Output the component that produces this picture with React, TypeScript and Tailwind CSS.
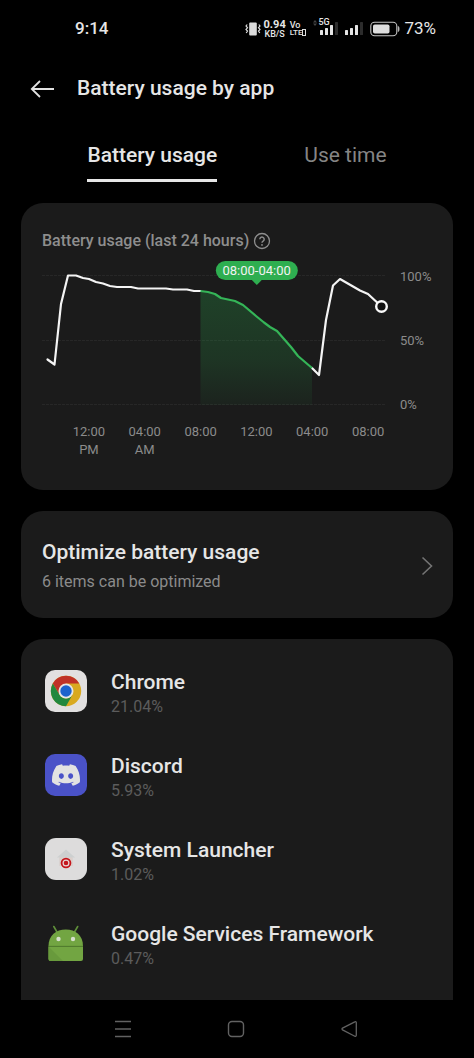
import type { ReactNode } from "react";
import { SiDiscord } from "react-icons/si";

const AXIS_TIMES = [
  ["12:00", "PM"],
  ["04:00", "AM"],
  ["08:00"],
  ["12:00"],
  ["04:00"],
  ["08:00"],
];

function VibrateIcon() {
  return (
    <svg width="16" height="16" viewBox="0 0 16 16" fill="none" stroke="#dcdcdc" strokeWidth="1.2">
      <rect x="4.2" y="1.5" width="7.6" height="13" rx="1" fill="#dcdcdc" stroke="none" />
      <path d="M2.2 3.5 1 5l1.5 1.7L1 8.4l1.5 1.7L1.2 12M13.8 3.500 15 5l-1.500 1.700L15 8.400l-1.500 1.700 1.300 1.900" />
    </svg>
  );
}

function SignalBars() {
  return (
    <svg width="19" height="13" viewBox="0 0 19 13" fill="#e4e4e4">
      <rect x="0" y="8" width="3" height="5" rx=".6" />
      <rect x="5" y="6" width="3" height="7" rx=".6" />
      <rect x="10" y="3" width="3" height="10" rx=".6" />
      <rect x="15" y="0" width="3" height="13" rx=".6" fill="#2c2c2c" />
    </svg>
  );
}

function BatteryIcon() {
  return (
    <svg width="30" height="16" viewBox="0 0 30 16" fill="none">
      <rect x=".8" y="1.3" width="26" height="13.4" rx="3.8" stroke="#c4c4c4" strokeWidth="1.1" />
      <rect x="3" y="3.5" width="16.5" height="9" rx="1.8" fill="#dedede" />
      <path d="M28.3 5.5c1 .6 1 4.4 0 5z" fill="#c4c4c4" stroke="#c4c4c4" strokeWidth=".8" />
    </svg>
  );
}

function StatusBar() {
  return (
    <div className="flex h-[57px] items-center justify-between pl-[75px] pr-[38px] text-[17px] text-[#e6e6e6]">
      <span className="font-medium">9:14</span>
      <div className="flex items-center">
        <VibrateIcon />
        <div className="ml-[3px] flex flex-col items-center">
          <span className="text-[11px] font-bold leading-[10px]">0.94</span>
          <span className="text-[9px] font-medium leading-[8px]">KB/S</span>
        </div>
        <div className="ml-1 flex flex-col text-[8px] font-medium leading-[8px]">
          <span className="text-[9px]">Vo</span>
          <span className="flex items-center">
            LTE
            <svg width="4" height="7" viewBox="0 0 4 7" fill="none" stroke="#dcdcdc">
              <rect x=".5" y=".5" width="3" height="6" />
            </svg>
          </span>
        </div>
        <div className="relative ml-3.5">
          <SignalBars />
          <span className="absolute -left-[7px] -top-1 flex items-center gap-px text-[9px] font-medium leading-[9px]">
            <svg width="4" height="6" viewBox="0 0 4 6" fill="#444">
              <path d="M0 2.4 2 0l2 2.4zM0 3.6h4L2 6z" />
            </svg>
            5G
          </span>
        </div>
        <div className="ml-1.5">
          <SignalBars />
        </div>
        <div className="ml-1.5">
          <BatteryIcon />
        </div>
        <span className="ml-1">73%</span>
      </div>
    </div>
  );
}

function UsageChart() {
  return (
    <div className="flex">
      <div className="relative flex-1">
        <svg
          viewBox="0 0 344 140"
          className="block h-auto w-full overflow-visible"
          fill="none"
          role="img"
          aria-label="Battery level over 24 hours"
        >
          <defs>
            <linearGradient id="range" x1="0" y1="21" x2="0" y2="135" gradientUnits="userSpaceOnUse">
              <stop offset="0" stopColor="#2bb551" stopOpacity=".25" />
              <stop offset=".6" stopColor="#2bb551" stopOpacity=".17" />
              <stop offset="1" stopColor="#2bb551" stopOpacity=".05" />
            </linearGradient>
          </defs>
          <path d="M0 5.5h344M0 70.5h344M0 134.5h344" stroke="#272727" strokeDasharray="3 1" />
          <path
            d="M158.5 21 166 22l7 2 6 4 14 3 8 4 13 11 8 6.5 6 4.5 7 4 7 8 7 8 7 9 14 12V135H158.5z"
            fill="url(#range)"
          />
          <g strokeWidth="2.2" strokeLinejoin="round" strokeLinecap="round">
            <path
              d="M5.5 89.5 12.5 94.5 19 34 26 5.5h8l7 2.5 6 1 7 3 7 1.5 7 2.5 7 1h14l7 1.5h28l7 1h14l7 1.5h6.5"
              stroke="#f4f4f4"
            />
            <path d="M270 98l7 7 7-55 7-34.500 7-6.500 20 11.500 8 3.500 13.500 12.500" stroke="#f4f4f4" />
            <path
              d="M158.500 21 166 22l7 2 6 4 14 3 8 4 13 11 8 6.500 6 4.500 7 4 7 8 7 8 7 9 14 12"
              stroke="#35b558"
              strokeLinecap="butt"
            />
          </g>
          <circle cx="339.500" cy="36.500" r="5.300" fill="#111" stroke="#fafafa" strokeWidth="2.400" />
        </svg>
        <div className="absolute -top-[9px] left-[62.4%] flex -translate-x-1/2 flex-col items-center">
          <span className="rounded-full bg-[#2eae50] px-[7px] text-[13px] leading-[19px] text-[#f2f2f2]">08:00-04:00</span>
          <svg width="10" height="5" viewBox="0 0 10 5" fill="#2eae50">
            <path d="M0 0h10L5 5z" />
          </svg>
        </div>
      </div>
      <div className="-mb-0.5 flex w-[46px] flex-col justify-between pl-3.5 text-[13px] leading-[14px] text-[#8b8b8b]">
        <span>100%</span>
        <span>50%</span>
        <span>0%</span>
      </div>
    </div>
  );
}

function ChartCard() {
  return (
    <section className="rounded-[22px] bg-[#1b1b1b] px-[21px] pb-[31px] pt-[26px]">
      <div className="flex h-6 items-center gap-1">
        <h2 className="text-base font-medium text-[#8e8e8e]">Battery usage (last 24 hours)</h2>
        <button type="button" aria-label="Help" className="text-[#8e8e8e]">
          <svg width="18" height="18" viewBox="0 0 18 18" fill="none" stroke="currentColor" className="block">
            <circle cx="9" cy="9" r="7.500" strokeWidth="1.300" />
            <path d="M6.800 7.200a2.200 2.200 0 1 1 3.500 1.800C9.500 9.600 9 9.900 9 10.800" strokeWidth="1.400" />
            <circle cx="9" cy="12.900" r=".9" fill="currentColor" stroke="none" />
          </svg>
        </button>
      </div>
      <div className="mt-[17px]">
        <UsageChart />
      </div>
      <div className="ml-[19px] mr-9 mt-[13px] grid grid-cols-6 text-center text-[13px] leading-[18px] text-[#8b8b8b]">
        {AXIS_TIMES.map((lines, i) => (
          <div key={i} className="flex flex-col">
            {lines.map((line) => (
              <span key={line}>{line}</span>
            ))}
          </div>
        ))}
      </div>
    </section>
  );
}

function ChromeIcon() {
  return (
    <svg width="42" height="42" viewBox="0 0 42 42">
      <rect width="42" height="42" rx="10" fill="#e2e0e0" />
      <g transform="translate(21 21)">
        <circle r="15.200" fill="#d9a920" />
        <path d="M0-7.500H13.200A15.200 15.200 0 0 0-13.200-7.500L-6.500 3.750z" fill="#c03227" />
        <path d="M-13.200-7.500A15.200 15.200 0 0 0 0 15.200L6.500 3.750A7.500 7.500 0 0 1-6.500 3.750z" fill="#22883e" />
        <circle r="7.500" fill="#e6e6e6" />
        <circle r="5.700" fill="#1c62cd" />
      </g>
    </svg>
  );
}

function DiscordIcon() {
  return (
    <span className="flex size-[42px] items-center justify-center rounded-[10px] bg-[#4a52c8] text-[#e2e2e2]">
      <SiDiscord size={28} />
    </span>
  );
}

function LauncherIcon() {
  return (
    <svg width="42" height="42" viewBox="0 0 42 42">
      <rect width="42" height="42" rx="11" fill="#dddcdc" />
      <path d="M12 19.500 21 11.500l9 8h-2.500V28h-13v-8.500z" fill="#cdd0d0" />
      <path d="M14.500 19.500h13V28h-13z" fill="#dccfca" />
      <circle cx="21" cy="25" r="5.300" fill="#c4161c" />
      <circle cx="21" cy="25" r="2.900" fill="none" stroke="#e6d8d8" strokeWidth="1.200" />
    </svg>
  );
}

function AndroidIcon() {
  return (
    <svg width="42" height="42" viewBox="0 0 42 42">
      <path d="M12 10 8.800 4.500M29.500 10 32.700 4.500" stroke="#5f8f3a" strokeWidth="1.600" strokeLinecap="round" />
      <path d="M3.500 24C3.500 13.500 11 7.500 20.800 7.500S38 13.500 38 24z" fill="#72a542" />
      <path d="M3.500 24.500H38V37a2 2 0 0 1-2 2H5.500a2 2 0 0 1-2-2z" fill="#72a542" />
      <path d="M3.500 24.500 18 39H5.500a2 2 0 0 1-2-2z" fill="#689a3c" />
      <path d="M3.500 24.300H38" stroke="#55852f" />
      <circle cx="13.500" cy="17" r="2.200" fill="#d5dfcc" />
      <circle cx="28" cy="17" r="2.200" fill="#d5dfcc" />
    </svg>
  );
}

const APPS: { name: string; share: string; icon: ReactNode }[] = [
  { name: "Chrome", share: "21.04%", icon: <ChromeIcon /> },
  { name: "Discord", share: "5.93%", icon: <DiscordIcon /> },
  { name: "System Launcher", share: "1.02%", icon: <LauncherIcon /> },
  { name: "Google Services Framework", share: "0.47%", icon: <AndroidIcon /> },
];

function NavigationBar() {
  return (
    <nav className="flex h-[58px] items-center justify-center gap-[95px] pr-[3px] text-[#626262]">
      <button type="button" aria-label="Recent apps">
        <svg width="18" height="18" viewBox="0 0 18 18" fill="none" stroke="currentColor" strokeWidth="1.400">
          <path d="M1 1.500h16M1 9h16M1 16.500h16" />
        </svg>
      </button>
      <button type="button" aria-label="Home">
        <svg width="18" height="18" viewBox="0 0 18 18" fill="none" stroke="currentColor" strokeWidth="1.400">
          <rect x="1.500" y="1.500" width="15" height="15" rx="3.500" />
        </svg>
      </button>
      <button type="button" aria-label="Back">
        <svg width="18" height="18" viewBox="0 0 18 18" fill="none" stroke="currentColor" strokeWidth="1.300">
          <path d="M14.800 1.800 2.500 8.200a.9.9 0 0 0 0 1.600l12.300 6.400a1 1 0 0 0 1.500-.9V2.700a1 1 0 0 0-1.500-.9z" />
        </svg>
      </button>
    </nav>
  );
}

export default function App() {
  return (
    <div className="flex min-h-screen flex-col bg-black font-['Roboto',sans-serif] text-[#e6e6e6]">
      <StatusBar />
      <header className="flex h-16 items-center gap-[22px] pl-[30px]">
        <button type="button" aria-label="Go back">
          <svg width="25" height="18" viewBox="0 0 25 18" fill="none" stroke="#e2e2e2" strokeWidth="1.800" className="block">
            <path d="M24 9H1.800M10 1 1.800 9l8.200 8" />
          </svg>
        </button>
        <h1 className="text-[21px] font-medium">Battery usage by app</h1>
      </header>
      <div role="tablist" className="flex justify-center gap-[87px] pt-5 text-[21px] leading-7">
        <button type="button" role="tab" aria-selected="true" className="border-b-[3px] border-[#e6e6e6] pb-2.5 font-medium">
          Battery usage
        </button>
        <button type="button" role="tab" aria-selected="false" className="border-b-[3px] border-transparent pb-2.5 text-[#858585]">
          Use time
        </button>
      </div>
      <main className="flex flex-1 flex-col gap-[21px] px-[21px] pt-[21px]">
        <ChartCard />
        <button type="button" className="flex items-center justify-between rounded-[22px] bg-[#1b1b1b] pb-6 pl-[21px] pr-5 pt-[27px] text-left">
          <span className="flex flex-col gap-1">
            <span className="text-[21px] font-medium leading-7">Optimize battery usage</span>
            <span className="text-base text-[#8b8b8b]">6 items can be optimized</span>
          </span>
          <svg width="12" height="20" viewBox="0 0 12 20" fill="none" stroke="#747474" strokeWidth="1.600">
            <path d="M1.500 1.500 10.500 10l-9 8.500" />
          </svg>
        </button>
        <ul className="flex-1 rounded-t-[22px] bg-[#1b1b1b] px-6 pt-2.5">
          {APPS.map((app) => (
            <li key={app.name}>
              <button type="button" className="flex h-[84px] w-full items-center gap-6 text-left">
                {app.icon}
                <span className="flex flex-col pt-1.5">
                  <span className="text-[21px] font-medium leading-[26px]">{app.name}</span>
                  <span className="text-base text-[#5c5c5c]">{app.share}</span>
                </span>
              </button>
            </li>
          ))}
        </ul>
      </main>
      <NavigationBar />
    </div>
  );
}
